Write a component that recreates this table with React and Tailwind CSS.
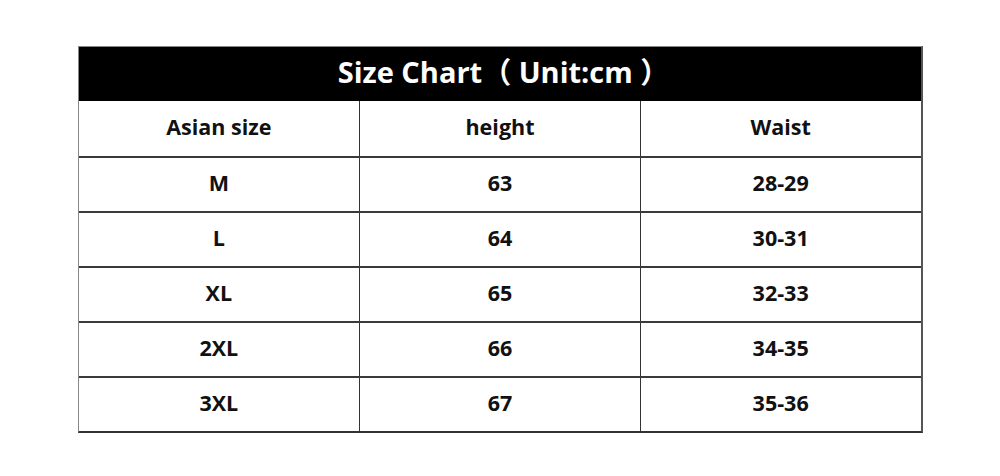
import React from "react";

const rows = [
  ["M", "63", "28-29"],
  ["L", "64", "30-31"],
  ["XL", "65", "32-33"],
  ["2XL", "66", "34-35"],
  ["3XL", "67", "35-36"],
];

export default function App() {
  return (
    <div
      className="w-[1000px] h-[476px] bg-white pt-[46px]"
      style={{ fontFamily: '"Open Sans", "Noto Sans CJK SC", sans-serif' }}
    >
      <div className="mx-auto w-[845px] border-l border-r-2 border-b-2 border-t border-l-[#888] border-t-[#888] border-r-[#555] border-b-[#333]">
        <div className="h-[54px] pb-[5px] pl-[8px] bg-black text-white flex items-center justify-center text-[29px] font-bold">
          Size Chart（ Unit:cm ）
        </div>
        <div className="grid grid-cols-3 h-[55px] text-[#111] text-[21.5px] font-bold">
          <div className="flex items-center justify-center pb-[2px]">Asian size</div>
          <div className="flex items-center justify-center pb-[2px] border-l border-[#333]">height</div>
          <div className="flex items-center justify-center pb-[2px] border-l border-[#333]">Waist</div>
        </div>
        {rows.map((r) => (
          <div key={r[0]} className="grid grid-cols-3 h-[55px] border-t-2 border-[#3a3a3a] text-[#111] text-[21.5px] font-bold">
            <div className="flex items-center justify-center pb-[2px]">{r[0]}</div>
            <div className="flex items-center justify-center pb-[2px] border-l border-[#333]">{r[1]}</div>
            <div className="flex items-center justify-center pb-[2px] border-l border-[#333]">{r[2]}</div>
          </div>
        ))}
      </div>
    </div>
  );
}
